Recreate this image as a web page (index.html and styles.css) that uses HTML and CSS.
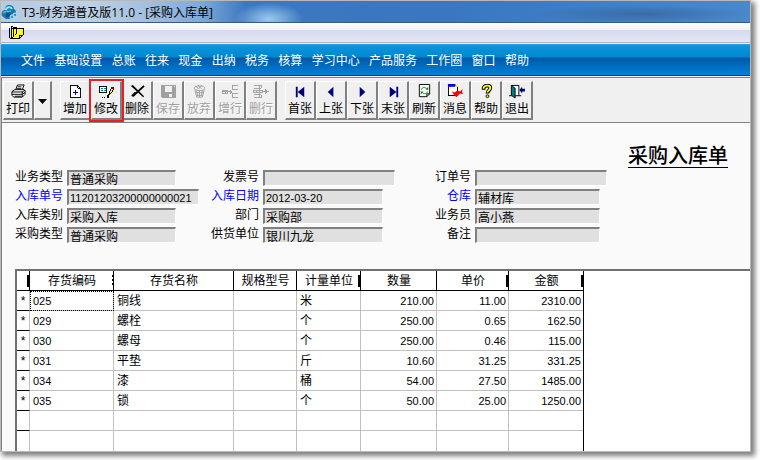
FILE: index.html
```
<!DOCTYPE html>
<html lang="zh-CN">

<head>
    <meta charset="UTF-8">
    <meta name="viewport" content="width=device-width, initial-scale=1.0">
    <title>采购入库单</title>
    <link rel="stylesheet" href="styles.css">
</head>

<body>
    <div class="window">
        <header class="titlebar">
            <svg class="logo" viewBox="0 0 16 16">
                <path d="M1 12C0 9 1 6 4 6 4 2 6 1 8 1c3 0 5 2 5 4 2 1 2 3 2 4l-3 6H5z" fill="#1578ac" />
                <path d="M5 6c0-3 5-4 6-1" stroke="#a9def0" stroke-width="2" fill="none" />
                <path d="M2 9c2-2 5-2 8-2" stroke="#58b4d8" stroke-width="1.500" fill="none" />
                <path d="M5 9h4v4H5z" fill="#0b4f86" />
                <circle cx="11" cy="13" r="2" fill="#2b98c6" stroke="#c8eaf6" />
                <circle cx="14" cy="11" r="2" fill="#2b98c6" stroke="#c8eaf6" />
            </svg>
            <span>T3-财务通普及版11.0 - [采购入库单]</span>
        </header>

        <div class="docbar">
            <svg class="note" viewBox="0 0 16 16" shape-rendering="crispEdges">
                <path d="M3 3h12v7l-3 3H3z" fill="#ffff00" stroke="#000" />
                <path d="M11 13v-3h4" fill="#fff" stroke="#000" />
                <path d="M1 3v9l2 2 2-2V2L4 1 3 2v8M6 2h2v7l-1 1" fill="none" stroke="#000" />
                <path d="M9 5h4M9 7h4" stroke="#fff" stroke-dasharray="1 1" />
            </svg>
        </div>

        <nav class="menu">
            <div class="items">
                <a href="#">文件</a>
                <a href="#">基础设置</a>
                <a href="#">总账</a>
                <a href="#">往来</a>
                <a href="#">现金</a>
                <a href="#">出纳</a>
                <a href="#">税务</a>
                <a href="#">核算</a>
                <a href="#">学习中心</a>
                <a href="#">产品服务</a>
                <a href="#">工作圈</a>
                <a href="#">窗口</a>
                <a href="#">帮助</a>
            </div>
        </nav>

        <div class="toolbar">
            <div class="group">
                <button class="tool">
                    <svg viewBox="0 0 16 16">
                        <path d="M5 6l2-5h7l-2 5" fill="#fff" stroke="#000" />
                        <path d="M7 3h4M6 5h5" stroke="#000" />
                        <path d="M1 8l3-2h10l1 1v4l-3 3H3l-2-2z" fill="#fff" stroke="#000" />
                        <path d="M1 8.500h11l3-2M1 11h11l3-2M12 8v6M4 13h7" fill="none" stroke="#000" />
                    </svg>
                    <span>打印</span>
                </button>
                <button class="tool drop" aria-label="打印选项">
                    <svg viewBox="0 0 9 5"><path d="M0 0h9L4.500 5z" /></svg>
                </button>
            </div>
            <div class="group">
                <button class="tool">
                    <svg viewBox="0 0 16 16" shape-rendering="crispEdges">
                        <path d="M2.500 1.500h8l3 3v10h-11z" fill="#fff" stroke="#000" />
                        <path d="M10.500 1.500v3h3" fill="none" stroke="#000" />
                        <path d="M5 8h6v2H5zM7 6h2v6H7z" fill="#000080" />
                    </svg>
                    <span>增加</span>
                </button>
                <button class="tool marked">
                    <svg viewBox="0 0 18 16" shape-rendering="crispEdges">
                        <path d="M1.500 2.500h8v7h-8z" fill="#fff" stroke="#000" />
                        <path d="M3 4h2v1H3zM6 4h2v1H6zM3 6h2v1H3zM6 6h2v1H6zM3 8h2v1H3zM6 8h2v1H6z" fill="#008080" />
                        <path d="M11 12l1-4 3-4 2 1-3 5z" fill="#ffff00" stroke="#000" />
                        <path d="M14 3h3v2h-3z" fill="#800000" />
                        <path d="M4 14h1v1H4zM6 14h1v1H6zM8 14h1v1H8zM10 12h2v3h-2z" />
                    </svg>
                    <span>修改</span>
                </button>
                <button class="tool">
                    <svg viewBox="0 0 16 16">
                        <path d="M1 2l2-1 12 12-1 1z" />
                        <path d="M15 2L3 13M6 9l-4 4" stroke="#000" stroke-width="2" fill="none" />
                    </svg>
                    <span>删除</span>
                </button>
                <button class="tool" disabled>
                    <svg viewBox="0 0 16 16" shape-rendering="crispEdges">
                        <path d="M0 1h16v14H2l-2-2z" fill="#a0a0a0" />
                        <path d="M4 2h8v6H4zM9 11h3v3H9zM14 2h1v1h-1z" fill="#f0f0f0" />
                    </svg>
                    <span>保存</span>
                </button>
                <button class="tool" disabled>
                    <svg viewBox="0 0 16 16" fill="none" stroke="#a0a0a0">
                        <ellipse cx="8" cy="4.500" rx="5.500" ry="2.500" />
                        <path d="M3 6l2 8h6l2-8M5 7l1 6M8 7v7M11 7l-1 6M4 9h8M5 12h6" />
                        <path d="M3 2l4 3 4-4M6 1l4 4" />
                    </svg>
                    <span>放弃</span>
                </button>
                <button class="tool" disabled>
                    <svg viewBox="0 0 18 16" shape-rendering="crispEdges" fill="none" stroke="#a0a0a0">
                        <path d="M17 1.500h-6v4h6M17 10.500h-6v4h6M1 6.500h5v4H1zM3.500 6v4M1 8.500h10" />
                        <path d="M8 5l3 3.500-3 3.500z" fill="#a0a0a0" stroke="none" />
                    </svg>
                    <span>增行</span>
                </button>
                <button class="tool" disabled>
                    <svg viewBox="0 0 18 16" shape-rendering="crispEdges" fill="none" stroke="#a0a0a0">
                        <path d="M1 1.500h8v3H1M1 11.500h8v3H1M1 6.500h9v3H1zM3.500 6v4M6.500 1v14M10 8h7" />
                        <path d="M13 5l3 3-3 3z" fill="#a0a0a0" stroke="none" />
                    </svg>
                    <span>删行</span>
                </button>
            </div>
            <div class="group">
                <button class="tool">
                    <svg viewBox="0 0 16 16" fill="#000080"><path d="M3 3h2v11H3zM12 3v11L5 8.500z" /></svg>
                    <span>首张</span>
                </button>
                <button class="tool">
                    <svg viewBox="0 0 16 16" fill="#000080"><path d="M10 3v11L4 8.500z" /></svg>
                    <span>上张</span>
                </button>
                <button class="tool">
                    <svg viewBox="0 0 16 16" fill="#000080"><path d="M5 3v11l6-5.500z" /></svg>
                    <span>下张</span>
                </button>
                <button class="tool">
                    <svg viewBox="0 0 16 16" fill="#000080"><path d="M11 3h2v11h-2zM4 3v11l7-5.500z" /></svg>
                    <span>末张</span>
                </button>
                <button class="tool">
                    <svg viewBox="0 0 16 16">
                        <path d="M2.500.500h11v10l-3 3h-8z" fill="#fff" stroke="#000" />
                        <path d="M10.500 13.500v-3h3" fill="none" stroke="#000" />
                        <path d="M5 6c0-3 4-3 5-1M11 8c0 3-4 3-5 1" fill="none" stroke="#008000" />
                        <path d="M12 3v3H9zM4 11V8h3z" fill="#008000" />
                    </svg>
                    <span>刷新</span>
                </button>
                <button class="tool">
                    <svg viewBox="0 0 17 16">
                        <path d="M1.500 1.500h10v11h-10z" fill="#fff" stroke="#000" shape-rendering="crispEdges" />
                        <path d="M1 0h8v3H1z" fill="#0000ff" />
                        <path d="M9 1h3v2H9z" fill="#ffff00" />
                        <path d="M5 8l3 1 3-2 3 1 3-3-1 3 1 3-3-1-4 4-3-3z" fill="#ff0000" />
                    </svg>
                    <span>消息</span>
                </button>
                <button class="tool">
                    <svg viewBox="0 0 16 16">
                        <path d="M5 6V4c1-3 7-3 7 0 0 3-3 3-3 6" fill="none" stroke="#000" stroke-width="4" />
                        <path d="M5 5V4c1-3 7-3 7 0 0 3-3 3-3 5" fill="none" stroke="#ffff00" stroke-width="2" />
                        <circle cx="9" cy="13" r="1.500" fill="#ffff00" stroke="#000" />
                    </svg>
                    <span>帮助</span>
                </button>
                <button class="tool">
                    <svg viewBox="0 0 17 16">
                        <path d="M0 12.500h4M10 12.500h3M2.500 1.500h8v11h-5" fill="#fff" stroke="#000" />
                        <path d="M2.500 1.500l4 3v10.500l-4-3z" fill="#008080" stroke="#000" />
                        <path d="M11 6.500l3-3.500v2h3v3h-3v2z" fill="#000080" />
                    </svg>
                    <span>退出</span>
                </button>
            </div>
        </div>

        <main class="sheet">
            <h1>采购入库单</h1>
            <form class="fields">
                <div class="column">
                    <div class="field"><label for="biz">业务类型</label><input id="biz" value="普通采购" readonly></div>
                    <div class="field key wide"><label for="no">入库单号</label><input id="no" class="num" value="11201203200000000021" readonly></div>
                    <div class="field"><label for="kind">入库类别</label><input id="kind" value="采购入库" readonly></div>
                    <div class="field"><label for="ptype">采购类型</label><input id="ptype" value="普通采购" readonly></div>
                </div>
                <div class="column second">
                    <div class="field wide"><label for="invoice">发票号</label><input id="invoice" readonly></div>
                    <div class="field key"><label for="date">入库日期</label><input id="date" class="num" value="2012-03-20" readonly></div>
                    <div class="field"><label for="dept">部门</label><input id="dept" value="采购部" readonly></div>
                    <div class="field"><label for="vendor">供货单位</label><input id="vendor" value="银川九龙" readonly></div>
                </div>
                <div class="column third">
                    <div class="field wide"><label for="order">订单号</label><input id="order" readonly></div>
                    <div class="field key"><label for="store">仓库</label><input id="store" value="辅材库" readonly></div>
                    <div class="field"><label for="clerk">业务员</label><input id="clerk" value="高小燕" readonly></div>
                    <div class="field"><label for="memo">备注</label><input id="memo" readonly></div>
                </div>
            </form>

            <div class="grid">
                <table>
                    <colgroup>
                        <col class="c-mark"><col class="c-code"><col class="c-name"><col class="c-spec">
                        <col class="c-unit"><col class="c-qty"><col class="c-price"><col class="c-sum">
                    </colgroup>
                    <thead>
                        <tr>
                            <th class="cut"></th>
                            <th class="cut thin">存货编码</th>
                            <th>存货名称</th>
                            <th>规格型号</th>
                            <th class="cut">计量单位</th>
                            <th>数量</th>
                            <th class="cut">单价</th>
                            <th class="cut">金额</th>
                        </tr>
                    </thead>
                    <tbody>
                        <tr><td>*</td><td class="focus">025</td><td>铜线</td><td></td><td>米</td><td>210.00</td><td>11.00</td><td>2310.00</td></tr>
                        <tr><td>*</td><td>029</td><td>螺栓</td><td></td><td>个</td><td>250.00</td><td>0.65</td><td>162.50</td></tr>
                        <tr><td>*</td><td>030</td><td>螺母</td><td></td><td>个</td><td>250.00</td><td>0.46</td><td>115.00</td></tr>
                        <tr><td>*</td><td>031</td><td>平垫</td><td></td><td>斤</td><td>10.60</td><td>31.25</td><td>331.25</td></tr>
                        <tr><td>*</td><td>034</td><td>漆</td><td></td><td>桶</td><td>54.00</td><td>27.50</td><td>1485.00</td></tr>
                        <tr><td>*</td><td>035</td><td>锁</td><td></td><td>个</td><td>50.00</td><td>25.00</td><td>1250.00</td></tr>
                        <tr><td></td><td></td><td></td><td></td><td></td><td></td><td></td><td></td></tr>
                        <tr><td></td><td></td><td></td><td></td><td></td><td></td><td></td><td></td></tr>
                    </tbody>
                </table>
            </div>
        </main>
    </div>
</body>

</html>
```
FILE: styles.css
```
* {
    box-sizing: border-box;
}

body {
    margin: 0;
    padding: 0 9px 9px 0;
    min-height: 100vh;
    display: flex;
    background: #fff;
    font-family: "Liberation Sans", "Noto Sans CJK SC", sans-serif;
    font-size: 12px;
    color: #000;
}

.window {
    flex: 1;
    display: flex;
    flex-direction: column;
    border: 1px solid #b8b8b8;
    background: #f0f0f0;
    box-shadow: 3px 3px 5px 1px rgba(0, 0, 0, 0.5);
}

/* title bar, the desktop shows through blurred */
.titlebar {
    display: flex;
    align-items: center;
    gap: 5px;
    height: 22px;
    border-bottom: 1px solid #3c5a80;
    background:
        radial-gradient(ellipse 34px 16px at 268px 18px, #9cc9f2, transparent),
        radial-gradient(ellipse 110px 9px at 640px 13px, #3a6ca6, transparent),
        linear-gradient(90deg, #b4cbe2 0, #bdd0e5 90px, #a0bee0 150px, #7da9d8 200px, #3d78bf 245px, #3a77c0 60%, #3f80c8 80%, #4a88cc 100%);
    font-family: "Open Sans", "Noto Sans CJK SC", sans-serif;
}

.logo {
    width: 16px;
    height: 16px;
}

.docbar {
    display: flex;
    align-items: center;
    height: 20px;
    padding-left: 7px;
    border-bottom: 1px solid #b4b4b4;
    background: linear-gradient(#fff 0, #f0f2f8 7px, #d5daee 7px, #e2e6f6 100%);
}

.note {
    width: 16px;
    height: 16px;
}

/* menu */
.menu {
    display: flex;
    margin-top: 1px;
    height: 32px;
    padding-left: 20px;
    align-items: center;
    border-bottom: 1px solid #00396c;
    background: linear-gradient(#2aa5ea 0, #0a94e0 2px, #0088cc 13px, #0058a8 14px, #0082d8 100%);
}

.items {
    display: flex;
    justify-content: space-between;
    width: 508px;
}

.menu a {
    color: #fff;
    text-decoration: none;
}

/* toolbar */
.toolbar {
    display: flex;
    gap: 8px;
    margin-top: 1px;
    padding: 3px 1px 2px;
    border: solid #808080;
    border-width: 1px 0 1px 1px;
    background: #f0f0f0;
}

.group {
    display: flex;
}

.tool {
    display: flex;
    flex-direction: column;
    align-items: center;
    gap: 1px;
    width: 31px;
    height: 39px;
    padding: 2px 0 0;
    border: solid;
    border-width: 1px 2px 2px 1px;
    border-color: #fff #808080 #808080 #fff;
    background: #f0f0f0;
    font: inherit;
    line-height: 18px;
    color: #000;
}

.tool svg {
    height: 16px;
}

.tool:disabled {
    color: #a0a0a0;
    text-shadow: 1px 1px #fff;
}

.tool.drop {
    width: 18px;
    justify-content: center;
}

.drop svg {
    width: 9px;
    height: 5px;
}

.marked {
    outline: 2px solid #ee1c25;
    z-index: 1;
}

/* form */
.sheet {
    flex: 1;
    padding-left: 13px;
    border-left: 1px solid #808080;
    background: #fafafa;
}

h1 {
    width: fit-content;
    margin: 23px 22px 2px auto;
    border-bottom: 1px solid #000;
    font-size: 20px;
    line-height: 21px;
    font-weight: 500;
}

.fields {
    display: flex;
    gap: 12px;
}

.column {
    display: flex;
    flex-direction: column;
    gap: 3px;
    width: 184px;
}

.field {
    display: flex;
    gap: 4px;
    height: 16px;
}

.field label {
    width: 48px;
    line-height: 14px;
    text-align: right;
    white-space: nowrap;
}

.field.key label {
    color: #0000ff;
}

.field input {
    width: 109px;
    height: 16px;
    padding: 0 0 0 1px;
    border: solid;
    border-width: 2px 1px 1px 2px;
    border-color: #808080 #fff #fff #808080;
    background: #e0e0e0;
    font: inherit;
    color: #000;
}

.field input.num {
    font-size: 11px;
}

.field.wide input {
    width: 132px;
}

.second .field input {
    width: 120px;
}

.third {
    margin-left: 16px;
}

.third .field input {
    width: 125px;
}

.second .wide input,
.third .wide input {
    width: 132px;
}

/* item list */
.grid {
    margin-top: 26px;
    border: solid #707070;
    border-width: 2px 0 0 2px;
    background: #fff;
}

table {
    table-layout: fixed;
    width: 567px;
    border-collapse: separate;
    border-spacing: 0;
    border-right: 1px solid #000;
}

.c-mark { width: 13px; }
.c-code { width: 84px; }
.c-name { width: 120px; }
.c-spec { width: 63px; }
.c-unit { width: 64px; }
.c-qty { width: 76px; }
.c-price { width: 72px; }
.c-sum { width: 74px; }

th,
td {
    height: 20px;
    padding: 0 2px 0 3px;
    border-right: 1px solid #c0c0c0;
    border-bottom: 1px solid #c0c0c0;
    line-height: 18px;
    white-space: nowrap;
    text-align: left;
}

th {
    position: relative;
    border-color: #000;
    font-weight: 400;
    text-align: center;
}

/* clipped glyph at the right edge of a heading */
.cut::after {
    content: "";
    position: absolute;
    right: 0;
    top: 4px;
    width: 2px;
    height: 12px;
    background: #000;
}

.cut.thin::after {
    width: 1px;
    background: repeating-linear-gradient(#000 0 2px, #fff 2px 4px);
}

td:first-child {
    padding: 0;
    border-bottom-color: #000;
    text-align: center;
}

td:nth-child(2),
td:nth-child(n + 6) {
    font-size: 11px;
}

td:nth-child(n + 6) {
    text-align: right;
}

th:last-child,
td:last-child {
    border-right: 0;
}

.focus {
    outline: 1px dotted #000;
    outline-offset: -1px;
}

tbody tr:last-child td {
    border-bottom: 0;
}
```
